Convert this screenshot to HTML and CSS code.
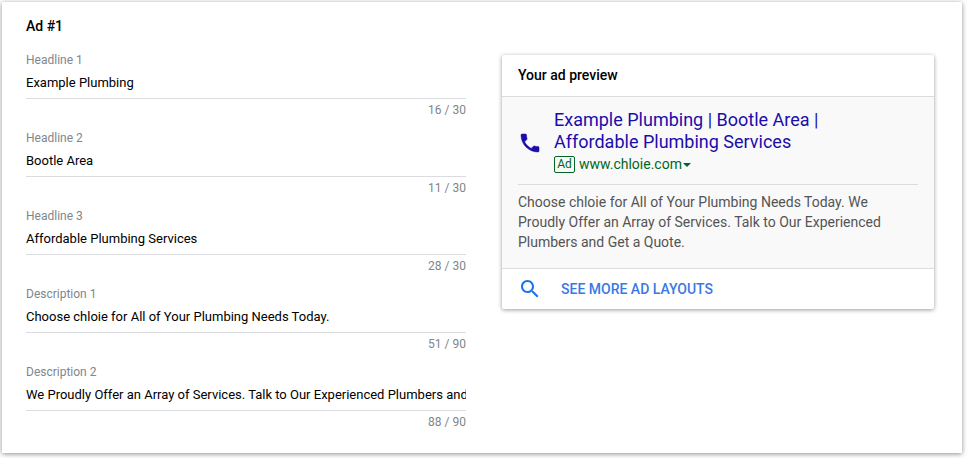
FILE: index.html
```html
<!DOCTYPE html>
<html lang="en">
<head>
  <meta charset="UTF-8">
  <title>Ad #1</title>
  <link rel="stylesheet" href="styles.css">
</head>
<body>
  <div class="page-card">
    <div class="ad-form">
      <div class="ad-title">Ad #1</div>

      <div class="field">
        <label>Headline 1</label>
        <div class="field-value">Example Plumbing</div>
        <div class="field-count">16 / 30</div>
      </div>
      <div class="field">
        <label>Headline 2</label>
        <div class="field-value">Bootle Area</div>
        <div class="field-count">11 / 30</div>
      </div>
      <div class="field">
        <label>Headline 3</label>
        <div class="field-value">Affordable Plumbing Services</div>
        <div class="field-count">28 / 30</div>
      </div>
      <div class="field">
        <label>Description 1</label>
        <div class="field-value">Choose chloie for All of Your Plumbing Needs Today.</div>
        <div class="field-count">51 / 90</div>
      </div>
      <div class="field">
        <label>Description 2</label>
        <div class="field-value">We Proudly Offer an Array of Services. Talk to Our Experienced Plumbers and Get a Quote.</div>
        <div class="field-count">88 / 90</div>
      </div>
    </div>

    <div class="preview">
      <div class="preview-header">Your ad preview</div>
      <div class="preview-body">
        <div class="preview-top">
          <svg class="phone-icon" viewBox="0 0 24 24" width="24" height="24">
            <path d="M6.62 10.79c1.44 2.83 3.76 5.14 6.59 6.59l2.2-2.2c.27-.27.67-.36 1.02-.24 1.12.37 2.33.57 3.57.57.55 0 1 .45 1 1V20c0 .55-.45 1-1 1-9.39 0-17-7.61-17-17 0-.55.45-1 1-1h3.5c.55 0 1 .45 1 1 0 1.25.2 2.45.57 3.57.11.35.03.74-.25 1.02l-2.2 2.2z"/>
          </svg>
          <div>
            <div class="preview-headline">Example Plumbing | Bootle Area | Affordable Plumbing Services</div>
            <div class="preview-url">
              <span class="ad-badge">Ad</span>
              <span>www.chloie.com</span>
              <span class="url-arrow"></span>
            </div>
          </div>
        </div>
        <div class="preview-desc">Choose chloie for All of Your Plumbing Needs Today. We Proudly Offer an Array of Services. Talk to Our Experienced Plumbers and Get a Quote.</div>
      </div>
      <div class="preview-footer">
        <svg class="search-icon" viewBox="0 0 24 24" width="24" height="24">
          <path d="M15.5 14h-.79l-.28-.27C15.41 12.59 16 11.11 16 9.5 16 5.91 13.09 3 9.5 3S3 5.91 3 9.5 5.91 16 9.5 16c1.61 0 3.09-.59 4.23-1.57l.27.28v.79l5 4.99L20.49 19l-4.99-5zm-6 0C7.01 14 5 11.99 5 9.5S7.01 5 9.5 5 14 7.01 14 9.5 11.99 14 9.5 14z"/>
        </svg>
        <span>SEE MORE AD LAYOUTS</span>
      </div>
    </div>
  </div>
</body>
</html>
```

FILE: styles.css
```css
html, body {
  margin: 0;
  height: 100%;
  background: #fff;
  font-family: Roboto, Arial, sans-serif;
}
.page-card {
  display: flex;
  align-items: flex-start;
  box-sizing: border-box;
  width: 960px;
  height: 451px;
  margin: 2px 0 0 2px;
  padding: 16px 28px 0 24px;
  background: #fff;
  box-shadow: 0 1px 5px rgba(0, 0, 0, 0.45);
}
.ad-form {
  width: 440px;
  flex-shrink: 0;
}
.ad-title {
  height: 17px;
  line-height: 17px;
  font-size: 14px;
  font-weight: 500;
  color: #000;
  margin-bottom: 17px;
}
.field {
  height: 78px;
  font-size: 13px;
}
.field label {
  display: block;
  height: 16px;
  line-height: 16px;
  font-size: 12px;
  color: #80868b;
  margin-bottom: 7px;
}
.field-value {
  height: 23px;
  line-height: 16px;
  color: #000;
  white-space: nowrap;
  overflow: hidden;
  border-bottom: 1px solid #dadce0;
}
.field-count {
  height: 14px;
  margin-top: 4px;
  line-height: 14px;
  font-size: 12px;
  color: #80868b;
  text-align: right;
}
.preview {
  width: 432px;
  margin-left: 36px;
  margin-top: 37px;
  background: #fff;
  border-radius: 2px;
  box-shadow: 0 1px 4px rgba(0, 0, 0, 0.4);
}
.preview-header {
  height: 41px;
  line-height: 40px;
  padding-left: 16px;
  font-size: 14px;
  font-weight: 500;
  color: #000;
  border-bottom: 1px solid #dadce0;
}
.preview-body {
  padding: 12px 16px 16px;
  background: #f9f9f9;
  border-bottom: 1px solid #dadce0;
}
.preview-top {
  display: flex;
  align-items: center;
  padding-bottom: 11px;
  border-bottom: 1px solid #dadce0;
}
.phone-icon {
  fill: #1a0dab;
  stroke: #1a0dab;
  stroke-width: 0.5;
  flex-shrink: 0;
  margin-top: 4px;
  margin-right: 12px;
}
.preview-headline {
  width: 290px;
  font-size: 18px;
  line-height: 22px;
  color: #1a0dab;
}
.preview-url {
  display: flex;
  align-items: center;
  margin-top: 2px;
  font-size: 14px;
  line-height: 18px;
  color: #006621;
}
.ad-badge {
  box-sizing: border-box;
  width: 21px;
  height: 17px;
  line-height: 15px;
  text-align: center;
  margin-right: 4px;
  font-size: 12px;
  border: 1px solid #006621;
  border-radius: 2px;
}
.url-arrow {
  width: 0;
  height: 0;
  margin: 2px 0 0 1px;
  border-left: 4px solid transparent;
  border-right: 4px solid transparent;
  border-top: 4px solid #006621;
}
.preview-desc {
  margin-top: 7px;
  font-size: 14px;
  line-height: 20px;
  color: #545454;
}
.preview-footer {
  display: flex;
  align-items: center;
  height: 40px;
  padding-left: 16px;
  font-size: 14px;
  font-weight: 500;
  color: #3b78e7;
}
.search-icon {
  fill: #1a73e8;
  flex-shrink: 0;
  margin-right: 19px;
}
```
